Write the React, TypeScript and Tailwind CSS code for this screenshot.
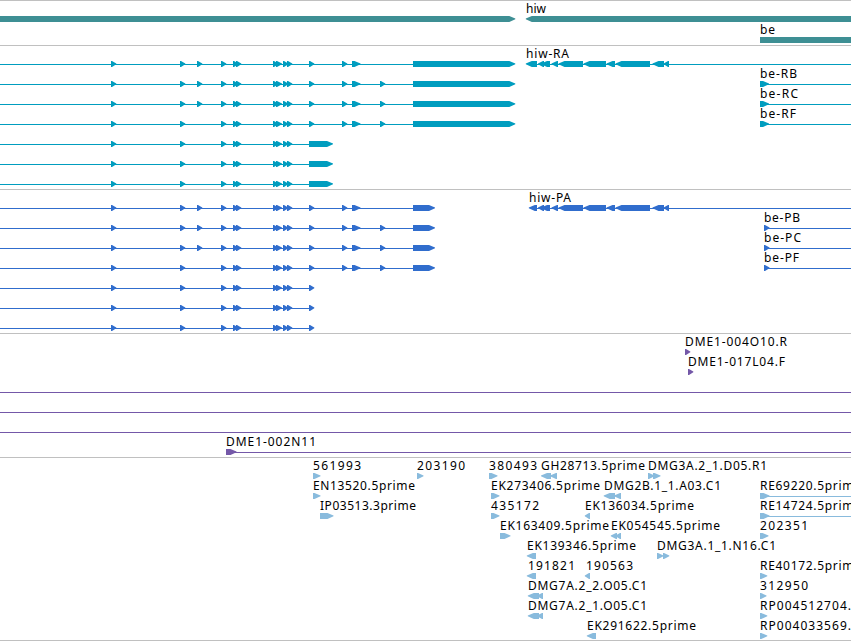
import React from 'react';

type Span = [number, number];
type Feature = { y: number; color: string; line?: Span; right?: Span[]; left?: Span[] };
type Label = [x: number, y: number, text: string, width: number];

const CYAN = '#009dbf';
const BLUE = '#306dcd';
const TEAL = '#3e8f94';
const PURPLE = '#7458a8';
const SKY = '#89bbdd';

// Block with a tapered head; dir 1 points right, -1 points left.
function arrow([a, b]: Span, y: number, dir: 1 | -1) {
  const len = b - a;
  const head = len > 7 ? 6 : len - 1;
  if (dir === 1) {
    return `${a},${y} ${b - head},${y} ${b},${y + 2.5} ${b},${y + 3.2} ${b - head},${y + 6} ${a},${y + 6}`;
  }
  return `${b},${y} ${a + head},${y} ${a},${y + 2.5} ${a},${y + 3.2} ${a + head},${y + 6} ${b},${y + 6}`;
}

function Glyphs({ f }: { f: Feature }) {
  return (
    <g fill={f.color}>
      {f.line && <rect x={f.line[0]} y={f.y + 3} width={f.line[1] - f.line[0]} height={1} />}
      {f.right?.map((s, i) => <polygon key={i} points={arrow(s, f.y, 1)} />)}
      {f.left?.map((s, i) => <polygon key={i} points={arrow(s, f.y, -1)} />)}
    </g>
  );
}

function Track({ className, features, labels, children }: {
  className: string; features: Feature[]; labels: Label[]; children?: React.ReactNode;
}) {
  return (
    <section className={`w-full border-b border-[#c0c0c0] box-border ${className}`}>
      <svg className="block h-full w-full overflow-hidden" fontFamily="'Noto Sans', sans-serif" fontSize="12">
        {features.map((f, i) => <Glyphs key={i} f={f} />)}
        {children}
        {labels.map(([x, y, text, width]) => (
          <text key={`${x}-${y}`} x={x} y={y} textLength={width} fill="#000">{text}</text>
        ))}
      </svg>
    </section>
  );
}

const EXONS: Span[] = [
  [111, 116.3], [180, 185.3], [221, 226.3], [233, 238.3], [236, 241.3],
  [273, 278.3], [276, 282], [283, 288.3], [287, 292.3],
];

function transcripts(color: string, longEnd: number, shortEnd: number): Feature[] {
  return [0, 1, 2, 3, 4, 5, 6].map((i) => {
    const right: Span[] = [...EXONS];
    if (i < 3) right.push([197, 202.3]);
    if (i < 4) {
      right.push([309, 314.3], [342, 347.3], [352, 360.5], [413, longEnd]);
      if (i > 0) right.push([380, 385.3]);
    } else right.push([309, shortEnd]);
    return { y: 15 + i * 20, color, line: [0, i < 4 ? 414 : 310] as Span, right };
  });
}

function hiw(color: string, start: number): Feature {
  return {
    y: 15, color, line: [start + 4, 851],
    left: [[start, 537], [538, 544], [541, 550], [551.5, 558], [558.5, 583], [583.5, 606], [606.5, 615], [615.5, 650], [652.5, 664], [663.7, 669]],
  };
}

const rna: Feature[] = [
  ...transcripts(CYAN, 515.3, 333), hiw(CYAN, 525.8),
  ...[35, 55, 75].map((y): Feature => ({ y, color: CYAN, line: [760, 851], right: [[760, 769]] })),
];
const protein: Feature[] = [
  ...transcripts(BLUE, 435, 314.3), hiw(BLUE, 528.8),
  ...[35, 55, 75].map((y): Feature => ({ y, color: BLUE, line: [764, 851], right: [[764, 769.5]] })),
];
const bac: Feature[] = [
  { y: 15, color: PURPLE, right: [[685, 690.3]] },
  { y: 35, color: PURPLE, right: [[688, 693.3]] },
  { y: 55, color: PURPLE, line: [0, 851] },
  { y: 75, color: PURPLE, line: [0, 851] },
  { y: 95, color: PURPLE, line: [0, 851] },
  { y: 115, color: PURPLE, line: [226, 851], right: [[226, 236.5]] },
];
const est: Feature[] = [
  { y: 15, color: SKY, right: [[313, 320.5], [417, 423.5], [489, 497.5], [648, 654.5], [653, 660.5]], left: [[541, 551], [550, 557]] },
  { y: 35, color: SKY, right: [[313, 320.5], [491, 499.5]], left: [[603.7, 615], [614, 621]] },
  { y: 35, color: SKY, line: [760, 851], right: [[760, 769.5]] },
  { y: 55, color: SKY, right: [[320, 333.5], [491, 499.5]], left: [[584.8, 590]] },
  { y: 55, color: SKY, line: [760, 851], right: [[760, 769.5]] },
  { y: 75, color: SKY, right: [[500, 510.5], [760, 768.5]], left: [[610.8, 617], [615.5, 621]] },
  { y: 95, color: SKY, right: [[657, 663.5], [663, 669.3]], left: [[526.8, 536]] },
  { y: 115, color: SKY, right: [[760, 767.3]], left: [[526.8, 536], [584.8, 590]] },
  { y: 135, color: SKY, right: [[760, 766.5]], left: [[527.8, 539], [537, 543]] },
  { y: 155, color: SKY, right: [[760, 767.3]], left: [[527.8, 539], [537, 543]] },
  { y: 175, color: SKY, right: [[760, 767.3]], left: [[586.8, 596]] },
];

export default function App() {
  return (
    <main className="flex h-[641px] w-[851px] flex-col overflow-hidden border-t border-[#c0c0c0] bg-white">
      <Track className="h-[45px]" features={[]} labels={[[526, 12, 'hiw', 20], [760, 33, 'be', 15]]}>
        <g fill={TEAL}>
          <rect x="0" y="15" width="509" height="6" />
          <polygon points={arrow([500, 515.3], 15, 1)} />
          <polygon points={arrow([525.8, 860], 15, -1)} />
          <rect x="760" y="36" width="91" height="6" />
        </g>
      </Track>
      <Track className="h-[144px]" features={rna} labels={[
        [526, 12, 'hiw-RA', 43], [760, 32, 'be-RB', 37], [760, 52, 'be-RC', 38], [760, 72, 'be-RF', 36],
      ]} />
      <Track className="h-[144px]" features={protein} labels={[
        [529, 12, 'hiw-PA', 42], [764, 32, 'be-PB', 36], [764, 52, 'be-PC', 37], [764, 72, 'be-PF', 35],
      ]} />
      <Track className="h-[124px]" features={bac} labels={[
        [685, 12, 'DME1-004O10.R', 102], [688, 32, 'DME1-017L04.F', 97], [226, 112, 'DME1-002N11', 90],
      ]} />
      <Track className="h-[183px]" features={est} labels={[
        [313, 12, '561993', 48], [417, 12, '203190', 48], [489, 12, '380493', 48], [541, 12, 'GH28713.5prime', 104], [648, 12, 'DMG3A.2_1.D05.R1', 119],
        [313, 32, 'EN13520.5prime', 102], [491, 32, 'EK273406.5prime', 109], [604, 32, 'DMG2B.1_1.A03.C1', 117], [760, 32, 'RE69220.5prime', 101],
        [320, 52, 'IP03513.3prime', 96], [491, 52, '435172', 48], [585, 52, 'EK136034.5prime', 109], [760, 52, 'RE14724.5prime', 101],
        [500, 72, 'EK163409.5prime', 109], [611, 72, 'EK054545.5prime', 109], [760, 72, '202351', 48],
        [527, 92, 'EK139346.5prime', 109], [657, 92, 'DMG3A.1_1.N16.C1', 119],
        [528, 112, '191821', 47], [586, 112, '190563', 47], [760, 112, 'RE40172.5prime', 101],
        [528, 132, 'DMG7A.2_2.O05.C1', 119], [760, 132, '312950', 48],
        [528, 152, 'DMG7A.2_1.O05.C1', 119], [760, 152, 'RP004512704.', 91],
        [587, 172, 'EK291622.5prime', 109], [760, 172, 'RP004033569.', 91],
      ]} />
    </main>
  );
}
